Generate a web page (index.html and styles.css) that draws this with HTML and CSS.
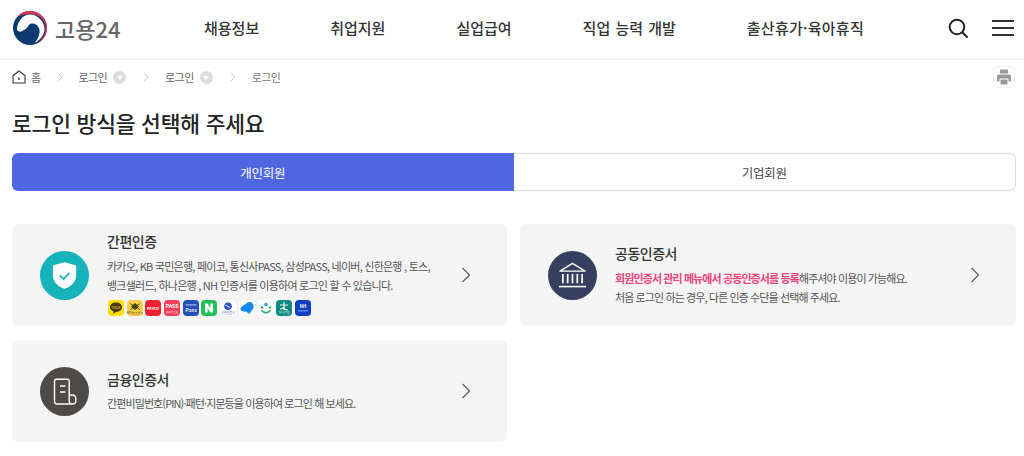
FILE: index.html
```html
<!DOCTYPE html>
<html lang="ko">
<head>
<meta charset="utf-8">
<title>고용24 로그인</title>
<link rel="stylesheet" href="styles.css">
</head>
<body>
<header class="header">
  <a class="logo">
    <svg class="logo-mark" viewBox="0 0 36 36" width="36" height="36">
      <circle cx="18" cy="18" r="17" fill="#0b3a70"/>
      <path d="M5 20C5 11 11 4.500 18 4.500C26 4.500 32.500 12 32.500 19C32.500 25 28 30 23 32.800C26.500 28 28 24 27.500 20C27 15.500 23 13 19.500 13.500C16 14 16 18 13 19.500C11 20.500 8 23.500 5 20Z" fill="#fff"/>
      <path d="M5 7C9 2.500 14 1 18 1A17 17 0 0 1 25 33.500C31 29 33.500 24 33.500 18C33.500 10 27 4 18 4C13 4 9 5 5 7Z" fill="#d8334f"/>
    </svg>
    <span class="logo-text">고용24</span>
  </a>
  <nav class="gnb">
    <a>채용정보</a>
    <a>취업지원</a>
    <a>실업급여</a>
    <a>직업 능력 개발</a>
    <a class="gnb-long">출산휴가·육아휴직</a>
  </nav>
  <div class="header-tools">
    <svg viewBox="0 0 22 22" width="22" height="22" fill="none" stroke="#222" stroke-width="2" stroke-linecap="round"><circle cx="10" cy="10" r="7.300"/><path d="M15.500 15.500L20 20"/></svg>
    <svg viewBox="0 0 22 18" width="22" height="18" fill="none" stroke="#333" stroke-width="1.800"><path d="M0 2H22M0 9H22M0 16H22"/></svg>
  </div>
</header>

<div class="crumbs">
  <svg class="home" viewBox="0 0 14 14" width="14" height="14" fill="none" stroke="#333" stroke-width="1.100"><path d="M1 5.500L7 1L13 5.500V13H1Z"/><path d="M7 7.500V10" stroke-width="1.400"/></svg>
  <span class="crumb-home">홈</span>
  <svg class="sep" viewBox="0 0 6 10" width="6" height="10" fill="none" stroke="#ccc"><path d="M1 1L5 5L1 9"/></svg>
  <span class="crumb">로그인</span>
  <span class="dot"></span>
  <svg class="sep" viewBox="0 0 6 10" width="6" height="10" fill="none" stroke="#ccc"><path d="M1 1L5 5L1 9"/></svg>
  <span class="crumb">로그인</span>
  <span class="dot"></span>
  <svg class="sep" viewBox="0 0 6 10" width="6" height="10" fill="none" stroke="#ccc"><path d="M1 1L5 5L1 9"/></svg>
  <span class="crumb crumb-last">로그인</span>
  <span class="print">
    <svg viewBox="0 0 16 16" width="16" height="16" fill="#999"><path d="M4 .5H12V4.500H4Z"/><path d="M2.500 5.500H13.500A1.500 1.500 0 0 1 15 7V12.500H12.500V9.500H3.500V12.500H1V7A1.500 1.500 0 0 1 2.500 5.500Z"/><path d="M4.500 10.500H11.500V15.500H4.500Z"/></svg>
  </span>
</div>

<main class="main">
  <h1 class="title">로그인 방식을 선택해 주세요</h1>
  <div class="tabs">
    <a class="tab tab-on">개인회원</a>
    <a class="tab">기업회원</a>
  </div>
  <div class="cards">
    <a class="card">
      <span class="ic ic-teal">
        <svg viewBox="0 0 28 30" width="25" height="27"><path d="M14 1L26 4.500V15C26 22 20 27 14 29C8 27 2 22 2 15V4.500Z" fill="#fff" stroke="#fff" stroke-linejoin="round" stroke-width="2"/><path d="M9 15L13 19L19.500 12" fill="none" stroke="#17b3bd" stroke-width="2"/></svg>
      </span>
      <span class="body body-brands">
        <strong class="name">간편인증</strong>
        <span class="desc desc-wide">카카오, KB 국민은행, 페이코, 통신사PASS, 삼성PASS, 네이버, 신한은행 , 토스,<br>뱅크샐러드, 하나은행 , NH 인증서를 이용하여 로그인 할 수 있습니다.</span>
        <span class="brands">
          <i class="b b1"><svg viewBox="0 0 16 16" width="16" height="16"><path d="M8 2.500C11.500 2.500 14 4.500 14 7.300C14 10 11.500 12 8 12L5 14L5.500 11.500C3.500 10.800 2 9.300 2 7.300C2 4.500 4.500 2.500 8 2.500Z" fill="#4a3a1f"/><text class="t" x="8" y="8.500" font-size="3.600" fill="#ffe000" text-anchor="middle">TALK</text></svg></i>
          <i class="b b2"><svg viewBox="0 0 16 16" width="16" height="16"><path d="M8 3L12 6.500L8 10L4 6.500Z" fill="#4b3f14"/><path d="M3 3.500L13 9.500M13 3.500L3 9.500" stroke="#4b3f14" stroke-width=".8"/><text class="t" x="8" y="14" font-size="2.800" fill="#5b4a1a" text-anchor="middle">KB국민인증서</text></svg></i>
          <i class="b b3"><svg viewBox="0 0 16 16" width="16" height="16"><text class="t" x="8" y="9.500" font-size="3.800" font-weight="700" fill="#fff" text-anchor="middle">PAYCO</text></svg></i>
          <i class="b b4"><svg viewBox="0 0 16 16" width="16" height="16"><text class="t" x="8" y="8" font-size="5.200" font-weight="700" fill="#fff" text-anchor="middle">PASS</text><text class="t" x="8" y="12.500" font-size="2.600" fill="#ffe0e5" text-anchor="middle">모바일신분</text></svg></i>
          <i class="b b5"><svg viewBox="0 0 16 16" width="16" height="16"><path d="M2.500 4.800H13.500" stroke="#9db4ea" stroke-width="1.200"/><text class="t" x="8" y="11.500" font-size="5.400" font-weight="500" fill="#fff" text-anchor="middle">Pass</text></svg></i>
          <i class="b b6"><svg viewBox="0 0 16 16" width="16" height="16"><path d="M4 12.500V3.500H6.500L9.500 8V3.500H12V12.500H9.500L6.500 8V12.500Z" fill="#fff"/></svg></i>
          <i class="b b7"><svg viewBox="0 0 16 16" width="16" height="16"><circle cx="8" cy="6.200" r="3.800" fill="#2a56c6"/><path d="M5.500 5L10 7.500" stroke="#fff" stroke-width=".9"/><text class="t" x="8" y="13.800" font-size="2.900" fill="#2a56c6" text-anchor="middle">신한인증서</text></svg></i>
          <i class="b b8"><svg viewBox="0 0 16 16" width="16" height="16"><path d="M1.500 8.500C3 5.500 5.500 5.500 8 2.800C11 .8 15 3 14.500 6.500C15 9.500 12 10 11 13.500C9 14.500 8.500 11.500 6 11.500C3 11.500 1 10.500 1.500 8.500Z" fill="#0f8cf2"/></svg></i>
          <i class="b b9"><svg viewBox="0 0 16 16" width="16" height="16"><circle cx="8" cy="4.500" r="1.800" fill="#2ea3dc"/><circle cx="4" cy="7.500" r="1.300" fill="#29b36a"/><circle cx="12" cy="7.500" r="1.300" fill="#29b36a"/><path d="M3.500 10C5 13.500 11 13.500 12.500 10" fill="none" stroke="#29b36a" stroke-width="1.600"/></svg></i>
          <i class="b b10"><svg viewBox="0 0 16 16" width="16" height="16"><path d="M8 2V10M4 5H12M4 9C6 9 8 8 8 6M12 10C10 10 8 9 8 7" fill="none" stroke="#e9f5f2" stroke-width="1.200"/><text class="t" x="8" y="14" font-size="2.900" fill="#d5efe9" text-anchor="middle">하나은행</text></svg></i>
          <i class="b b11"><svg viewBox="0 0 16 16" width="16" height="16"><text class="t" x="8" y="8" font-size="4.400" font-weight="700" fill="#fff" text-anchor="middle">NH</text><path d="M3 10.800H13" stroke="#8fb0f0"/></svg></i>
        </span>
      </span>
      <svg class="arrow" viewBox="0 0 10 16" width="10" height="16" fill="none" stroke="#666" stroke-width="1.400"><path d="M1.500 1L8.500 8L1.500 15"/></svg>
    </a>

    <a class="card">
      <span class="ic ic-navy">
        <svg viewBox="0 0 30 28" width="29" height="27" fill="none" stroke="#fff" stroke-width="1.400"><path d="M15 1.500L28 9.500H2Z" stroke-linejoin="round"/><path d="M5 12.500V22M10 12.500V22M15 12.500V22M20 12.500V22M25 12.500V22" stroke-width="1.800"/><path d="M1 25.500H29" stroke-width="1.600"/></svg>
      </span>
      <span class="body">
        <strong class="name">공동인증서</strong>
        <span class="desc"><em class="pink">회원인증서 관리 메뉴에서 공동인증서를 등록</em>해주셔야 이용이 가능해요.<br>처음 로그인 하는 경우, 다른 인증 수단을 선택해 주세요.</span>
      </span>
      <svg class="arrow" viewBox="0 0 10 16" width="10" height="16" fill="none" stroke="#666" stroke-width="1.400"><path d="M1.500 1L8.500 8L1.500 15"/></svg>
    </a>

    <a class="card">
      <span class="ic ic-brown">
        <svg viewBox="0 0 24 27" width="24" height="27" fill="none" stroke="#fff" stroke-width="1.400"><path d="M19 26H4C2.500 26 1.500 25 1.500 23V3C1.500 2 2.200 1.200 3.500 1.200H14.500C15.500 1.200 16.200 2 16.200 3V23C16.200 25 17.500 26 19 26C21 26 22.800 25 22.800 23V21C22.800 19 21.500 17 19 17H16.200"/><path d="M7 8H12.500M7 14H12.500"/></svg>
      </span>
      <span class="body">
        <strong class="name">금융인증서</strong>
        <span class="desc">간편비밀번호(PIN)·패턴·지문등을 이용하여 로그인 해 보세요.</span>
      </span>
      <svg class="arrow" viewBox="0 0 10 16" width="10" height="16" fill="none" stroke="#666" stroke-width="1.400"><path d="M1.500 1L8.500 8L1.500 15"/></svg>
    </a>
  </div>
</main>
</body>
</html>
```
FILE: styles.css
```css
* { box-sizing: border-box; }
html, body { margin: 0; padding: 0; }
body {
  width: 1024px;
  height: 456px;
  overflow: hidden;
  background: #fff;
  font-family: "Noto Sans CJK KR", "Noto Sans", sans-serif;
  color: #333;
}
a { color: inherit; text-decoration: none; }
i, em { font-style: normal; }

.header {
  display: flex;
  align-items: center;
  height: 60px;
  padding: 0 10px 3px 12px;
  border-bottom: 2px solid #f5f5f5;
}
.logo { display: flex; align-items: center; width: 192px; }
.logo-mark { flex: none; }
.logo-text {
  margin-left: 7px;
  font-size: 22px;
  line-height: 28px;
  font-weight: 500;
  letter-spacing: 0;
  color: #666;
}
.gnb { display: flex; gap: 71px; }
.gnb a {
  font-size: 15px;
  line-height: 22px;
  font-weight: 500;
  letter-spacing: 0;
  word-spacing: 1px;
  color: #333;
}
.gnb .gnb-long { letter-spacing: .25px; }
.header-tools {
  margin-left: auto;
  display: flex;
  align-items: center;
  gap: 23px;
}

.crumbs {
  display: flex;
  align-items: center;
  height: 34px;
  padding: 0 9px 0 12px;
  font-size: 11px;
  color: #666;
  letter-spacing: -.6px;
}
.home { flex: none; }
.crumb-home { margin-left: 5px; }
.sep { margin: 0 16px 0 16px; flex: none; }
.crumb { line-height: 16px; }
.crumb-last { color: #777; }
.dot {
  position: relative;
  width: 13px;
  height: 13px;
  margin: 0 1px 0 6px;
  border-radius: 50%;
  background: #ddd;
}
.dot::after {
  content: "";
  position: absolute;
  left: 3.500px;
  top: 5px;
  border: 3px solid transparent;
  border-top: 4px solid #fff;
}
.print {
  margin-left: auto;
  width: 22px;
  height: 22px;
  display: flex;
  align-items: center;
  justify-content: center;
  border: 1px solid #f2f2f2;
  border-radius: 3px;
}

.main { padding: 0 8px 0 12px; }
.title {
  margin: 13px 0 14px;
  font-size: 21.500px;
  line-height: 32px;
  font-weight: 500;
  letter-spacing: -.2px;
  color: #222;
}
.tabs {
  display: flex;
  height: 38px;
  border-radius: 6px;
  font-size: 12.500px;
  letter-spacing: -.3px;
}
.tab {
  flex: 1;
  display: flex;
  align-items: center;
  justify-content: center;
  border: 1px solid #ddd;
  border-left: 0;
  border-radius: 0 6px 6px 0;
  color: #444;
}
.tab-on {
  border: 0;
  border-radius: 6px 0 0 6px;
  background: #4f66e0;
  color: #fff;
}
.cards {
  display: grid;
  grid-template-columns: 495px 496px;
  grid-auto-rows: 102px;
  gap: 14px 13px;
  margin-top: 33px;
}
.card {
  display: flex;
  align-items: center;
  padding: 0 36px 0 28px;
  background: #f4f4f4;
  border-radius: 6px;
}
.ic {
  flex: none;
  width: 49px;
  height: 49px;
  border-radius: 50%;
  display: flex;
  align-items: center;
  justify-content: center;
}
.ic-teal { background: #17b3bd; }
.ic-navy { background: #353f60; }
.ic-brown { background: #4e4a47; }
.body {
  flex: 1;
  min-width: 0;
  margin-left: 18px;
  display: flex;
  flex-direction: column;
}
.body-brands { padding-bottom: 3px; }
.name {
  font-size: 14px;
  line-height: 20px;
  font-weight: 500;
  letter-spacing: -.5px;
  color: #333;
}
.desc {
  margin-top: 5.500px;
  font-size: 11px;
  line-height: 19px;
  letter-spacing: -.9px;
  white-space: nowrap;
  color: #555;
}
.desc-wide { letter-spacing: -.76px; }
.pink { color: #f0447a; font-weight: 700; }
.brands { display: flex; gap: 2.700px; margin-top: 5.500px; margin-left: 1px; }
.b { width: 16px; height: 16px; border-radius: 4px; display: block; overflow: hidden; }
.b svg { display: block; }
.t { letter-spacing: 0; }
.b1 { background: #ffe000; }
.b2 { background: #f8cf47; }
.b3 { background: #f2232e; }
.b4 { background: #f53f5a; }
.b5 { background: #2450b8; }
.b6 { background: #22bf5b; }
.b7, .b8, .b9 { background: #fff; }
.b10 { background: #0f8a80; }
.b11 { background: #0f3fc4; }
.arrow { flex: none; margin-left: 12px; }
```
